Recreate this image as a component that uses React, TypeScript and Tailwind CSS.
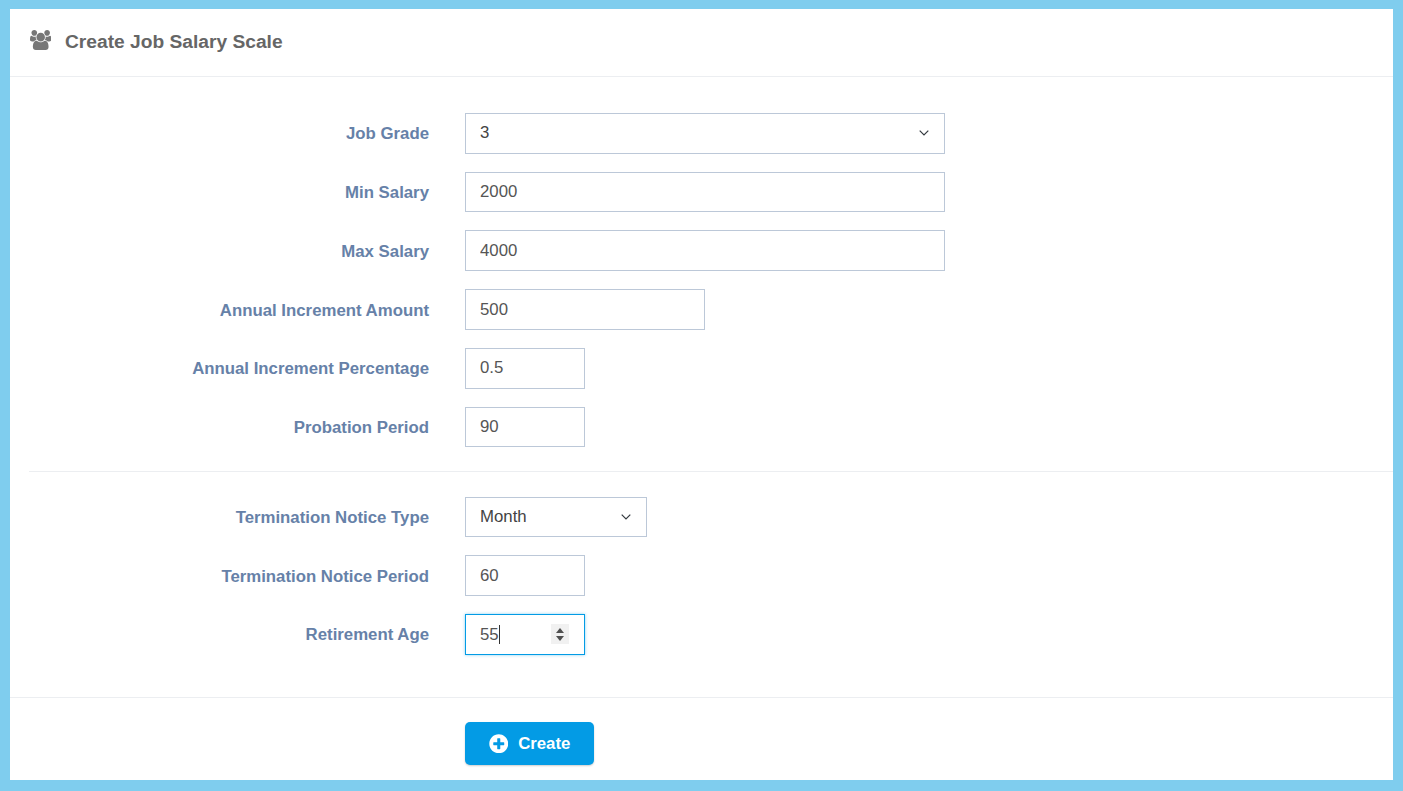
import React from "react";
import { FaPlusCircle } from "react-icons/fa";

const Chevron = () => (
  <svg width="10" height="6" viewBox="0 0 10 6" fill="none" stroke="#343a40" strokeWidth="1.2">
    <path d="M0.7 0.7 L5 5 L9.3 0.7" />
  </svg>
);

const UsersIcon = () => (
  <svg width="21.4" height="20" viewBox="0 0 1920 1792" fill="#777" className="shrink-0">
    <path d="M593 896q-162 5-265 128H194q-82 0-138-40.5T0 865q0-353 124-353 6 0 43.5 21t97.5 42.5T384 597q67 0 133-23-5 37-5 66 0 139 81 256zm1071 637q0 120-73 189.5t-194 69.5H523q-121 0-194-69.5T256 1533q0-53 3.5-103.5t14-109T300 1212t43-97.5 62-81 85.5-53.5T602 960q10 0 43 21.5t73 48 107 48 135 21.5 135-21.5 107-48 73-48 43-21.5q61 0 111.5 20t85.5 53.5 62 81 43 97.5 26.5 108.5 14 109 3.5 103.5zM640 256q0 106-75 181t-181 75-181-75-75-181 75-181T384 0t181 75 75 181zm704 384q0 159-112.5 271.5T960 1024 688.5 911.5 576 640t112.5-271.5T960 256t271.5 112.5T1344 640zm576 225q0 78-56 118.5t-138 40.5h-134q-103-123-265-128 81-117 81-256 0-29-5-66 66 23 133 23 59 0 119-21.5t97.5-42.5 43.5-21q124 0 124 353zm-128-609q0 106-75 181t-181 75-181-75-75-181 75-181 181-75 181 75 75 181z" />
  </svg>
);

const Row = ({ label, children }: { label: string; children: React.ReactNode }) => (
  <div className="flex items-center h-[40.56px]">
    <label className="w-[419px] pt-[2px] text-right text-[16.8px] leading-[24px] font-bold text-[#6681a8] shrink-0">{label}</label>
    <div className="ml-[36px]">{children}</div>
  </div>
);

const Input = ({ value, w }: { value: string; w: string }) => (
  <input
    readOnly
    value={value}
    className={`${w} h-[40.56px] border border-[#bcc8d8] bg-white px-[14px] text-[16.8px] text-[#555] outline-none`}
  />
);

const Select = ({ value, w }: { value: string; w: string }) => (
  <div className={`${w} h-[40.56px] border border-[#bcc8d8] bg-white pl-[14px] pr-[15px] pb-[1px] flex items-center justify-between text-[16.8px] text-[#444]`}>
    <span>{value}</span>
    <span className="mt-[1px] flex"><Chevron /></span>
  </div>
);

export default function App() {
  return (
    <div className="h-screen overflow-hidden bg-[#7fcdee] pt-[9px] pl-[10px] pr-[10px] pb-[11px] font-['Liberation_Sans',Arial,sans-serif]">
      <div className="bg-white h-full flex flex-col">
        <header className="h-[68px] shrink-0 border-b border-[#eceef1] flex items-center pl-[20px] pb-[3px]">
          <span className="-mt-[2px] flex"><UsersIcon /></span>
          <h1 className="ml-[13.6px] text-[19.2px] font-bold text-[#666] mt-[3px]">Create Job Salary Scale</h1>
        </header>
        <form className="flex flex-col flex-1">
          <div className="pt-[35.96px] flex flex-col gap-[18.22px]">
            <Row label="Job Grade"><Select value="3" w="w-[480px]" /></Row>
            <Row label="Min Salary"><Input value="2000" w="w-[480px]" /></Row>
            <Row label="Max Salary"><Input value="4000" w="w-[480px]" /></Row>
            <Row label="Annual Increment Amount"><Input value="500" w="w-[240px]" /></Row>
            <Row label="Annual Increment Percentage"><Input value="0.5" w="w-[120px]" /></Row>
            <Row label="Probation Period"><Input value="90" w="w-[120px]" /></Row>
          </div>
          <div className="ml-[19px] mt-[23.2px] mb-[25.1px] border-t border-[#eceef1]" />
          <div className="flex flex-col gap-[18.22px]">
            <Row label="Termination Notice Type"><Select value="Month" w="w-[182px]" /></Row>
            <Row label="Termination Notice Period"><Input value="60" w="w-[120px]" /></Row>
            <Row label="Retirement Age">
              <div className="w-[120px] h-[40.56px] border border-[#039be5] shadow-[0_0_3px_rgba(3,155,229,0.45)] bg-white pl-[14px] pr-[15px] flex items-center justify-between text-[16.8px] text-[#555]">
                <span className="flex items-center">55<span className="w-px h-[19px] bg-[#333]" /></span>
                <span className="w-[18px] h-[20px] bg-[#f1f1f1] flex flex-col items-center justify-center gap-[3px]">
                  <span className="w-0 h-0 border-x-[4.5px] border-x-transparent border-b-[5px] border-b-[#505050]" />
                  <span className="w-0 h-0 border-x-[4.5px] border-x-transparent border-t-[5px] border-t-[#505050]" />
                </span>
              </div>
            </Row>
          </div>
          <div className="mt-[42.2px] border-t border-[#eceef1] pt-[24px] pl-[455px]">
            <button type="button" className="w-[129px] h-[43px] rounded-[5px] bg-[#039be5] shadow-[0_1px_2px_rgba(0,0,0,0.2)] text-white font-bold text-[16.8px] flex items-center justify-center gap-[10px]">
              <FaPlusCircle className="w-[19.5px] h-[19.5px]" />
              Create
            </button>
          </div>
        </form>
      </div>
    </div>
  );
}
